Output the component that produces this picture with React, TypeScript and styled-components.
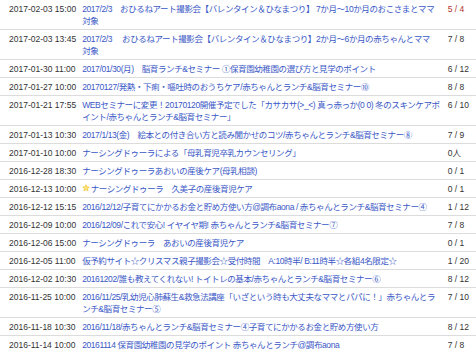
import React from "react";
import styled, { createGlobalStyle } from "styled-components";

const Global = createGlobalStyle`
  html, body { margin: 0; padding: 0; background: #fff; }
  body {
    font-family: "Liberation Sans", "Noto Sans CJK JP", sans-serif;
    font-size: 8.5px;
    line-height: 12px;
    color: #333;
  }
`;

const Table = styled.table`
  width: 476px;
  border-collapse: collapse;
  border-spacing: 0;
  margin-top: -1px;
`;

const Row = styled.tr`
  border-top: 1px solid #dcdcdc;
`;

const DateCell = styled.td`
  vertical-align: top;
  white-space: nowrap;
  padding: 2.5px 3px 2.5px 9px;
  color: #333;
`;

const TitleCell = styled.td`
  vertical-align: top;
  white-space: pre-line;
  padding: 2.5px 5px 2.5px 3px;
`;

const Link = styled.a`
  color: #3a58c6;
  text-decoration: none;
  cursor: pointer;
  letter-spacing: -0.4px;
`;

const CountCell = styled.td<{ $over?: boolean }>`
  vertical-align: top;
  white-space: nowrap;
  width: 21px;
  padding: 2.5px 7px 2.5px 3px;
  color: ${(p) => (p.$over ? "#b3342c" : "#333")};
`;

const StarIcon = styled.svg`
  width: 8px;
  height: 8px;
  vertical-align: -0.5px;
  margin-right: 0.5px;
`;

type Item = { date: string; title: string; count: string; over?: boolean; star?: boolean };

const items: Item[] = [
  { date: "2017-02-03 15:00", title: "2017/2/3\u3000おひるねアート撮影会【バレンタイン＆ひなまつり】 7か月〜10か月のおこさまとママ\n対象", count: "5 / 4", over: true },
  { date: "2017-02-03 13:45", title: "2017/2/3\u3000 おひるねアート撮影会【バレンタイン＆ひなまつり】2か月〜6か月の赤ちゃんとママ\n対象", count: "7 / 8" },
  { date: "2017-01-30 11:00", title: "2017/01/30(月)\u3000脳育ランチ&セミナー ①保育園幼稚園の選び方と見学のポイント", count: "6 / 12" },
  { date: "2017-01-27 10:00", title: "20170127/発熱・下痢・嘔吐時のおうちケア/赤ちゃんとランチ&脳育セミナー⑩", count: "8 / 8" },
  { date: "2017-01-21 17:55", title: "WEBセミナーに変更！20170120開催予定でした「カサカサ(>_<) 真っ赤っか(0 0) 冬のスキンケアポ\nイント/赤ちゃんとランチ&脳育セミナー」", count: "6 / 10" },
  { date: "2017-01-13 10:30", title: "2017/1/13(金)\u3000絵本との付き合い方と読み聞かせのコツ/赤ちゃんとランチ&脳育セミナー⑧", count: "7 / 9" },
  { date: "2017-01-10 10:00", title: "ナーシングドゥーラによる「母乳育児卒乳カウンセリング」", count: "0人" },
  { date: "2016-12-28 18:30", title: "ナーシングドゥーラあおいの産後ケア(母乳相談)", count: "0 / 1" },
  { date: "2016-12-13 10:00", title: "ナーシングドゥーラ\u3000久美子の産後育児ケア", count: "0 / 1", star: true },
  { date: "2016-12-12 15:15", title: "2016/12/12/子育てにかかるお金と貯め方使い方@調布aona / 赤ちゃんとランチ&脳育セミナー④", count: "1 / 12" },
  { date: "2016-12-09 10:00", title: "2016/12/09/これで安心! イヤイヤ期! 赤ちゃんとランチ&脳育セミナー⑦", count: "7 / 8" },
  { date: "2016-12-06 15:00", title: "ナーシングドゥーラ\u3000あおいの産後育児ケア", count: "0 / 1" },
  { date: "2016-12-05 11:00", title: "仮予約サイト☆クリスマス親子撮影会☆受付時間\u3000A:10時半/ B:11時半☆各組4名限定☆", count: "1 / 20" },
  { date: "2016-12-02 10:30", title: "20161202/誰も教えてくれない! トイトレの基本/赤ちゃんとランチ&脳育セミナー⑥", count: "8 / 12" },
  { date: "2016-11-25 10:00", title: "2016/11/25/乳幼児心肺蘇生&救急法講座「いざという時も大丈夫なママとパパに！」赤ちゃんとラ\nンチ&脳育セミナー⑤", count: "7 / 10" },
  { date: "2016-11-18 10:30", title: "2016/11/18/赤ちゃんとランチ&脳育セミナー④子育てにかかるお金と貯め方使い方", count: "8 / 12" },
  { date: "2016-11-14 10:00", title: "20161114 保育園幼稚園の見学のポイント 赤ちゃんとランチ@調布aona", count: "7 / 8" },
];

const Star = () => (
  <StarIcon viewBox="0 0 24 24">
    <path
      d="M12 2.2l2.9 6.3 6.9.7-5.2 4.6 1.5 6.8L12 17.1l-6.1 3.5 1.5-6.8-5.2-4.6 6.9-.7z"
      fill="#ffe680"
      stroke="#eab308"
      strokeWidth="1.6"
      strokeLinejoin="round"
    />
  </StarIcon>
);

export default function App() {
  return (
    <>
      <Global />
      <Table>
        <tbody>
          {items.map((it, i) => (
            <Row key={i}>
              <DateCell>{it.date}</DateCell>
              <TitleCell>
                {it.star && <Star />}
                <Link>{it.title}</Link>
              </TitleCell>
              <CountCell $over={it.over}>{it.count}</CountCell>
            </Row>
          ))}
        </tbody>
      </Table>
    </>
  );
}
